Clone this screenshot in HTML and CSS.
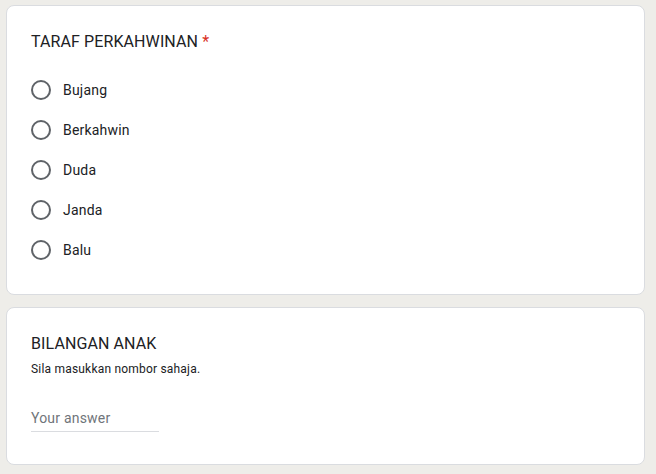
FILE: index.html
```html
<!DOCTYPE html>
<html>
<head>
<meta charset="utf-8">
<link rel="stylesheet" href="styles.css">
</head>
<body>
<div class="page">
  <div class="card">
    <div class="q-title">TARAF PERKAHWINAN <span class="req">*</span></div>
    <div class="options">
      <label class="opt"><span class="radio"></span><span class="opt-label">Bujang</span></label>
      <label class="opt"><span class="radio"></span><span class="opt-label">Berkahwin</span></label>
      <label class="opt"><span class="radio"></span><span class="opt-label">Duda</span></label>
      <label class="opt"><span class="radio"></span><span class="opt-label">Janda</span></label>
      <label class="opt"><span class="radio"></span><span class="opt-label">Balu</span></label>
    </div>
  </div>
  <div class="card card2">
    <div class="q-title">BILANGAN ANAK</div>
    <div class="q-desc">Sila masukkan nombor sahaja.</div>
    <div class="answer"><span class="placeholder">Your answer</span></div>
  </div>
</div>
</body>
</html>
```
FILE: styles.css
```css
html, body {
  margin: 0;
  padding: 0;
  background: #eeede9;
}
body {
  font-family: Roboto, "Liberation Sans", Arial, sans-serif;
  color: #202124;
}
.page {
  padding: 5px 11px 0 6px;
  display: flex;
  flex-direction: column;
  gap: 12px;
}
.card {
  background: #fff;
  border: 1px solid #dadce0;
  border-radius: 8px;
  padding: 24px 24px 24px 24px;
}
.q-title {
  font-size: 16px;
  line-height: 24px;
  letter-spacing: 0.1px;
  color: #202124;
}
.req {
  color: #d93025;
}
.options {
  margin-top: 16px;
  display: flex;
  flex-direction: column;
}
.opt {
  height: 40px;
  display: flex;
  align-items: center;
}
.radio {
  box-sizing: border-box;
  width: 20px;
  height: 20px;
  border: 2px solid #5f6368;
  border-radius: 50%;
  margin-right: 12px;
  flex: none;
}
.opt-label {
  font-size: 14px;
  letter-spacing: 0.2px;
  color: #202124;
}
.card2 {
  padding-bottom: 32px;
}
.q-desc {
  font-size: 12px;
  line-height: 18px;
  letter-spacing: 0.2px;
  margin-top: 4px;
  color: #202124;
}
.answer {
  box-sizing: border-box;
  width: 128px;
  margin-top: 21px;
  height: 33px;
  padding-bottom: 3px;
  border-bottom: 1px solid #dadce0;
  display: flex;
  align-items: flex-end;
}
.placeholder {
  font-size: 14px;
  line-height: 20px;
  letter-spacing: 0.2px;
  color: #70757a;
}
```
